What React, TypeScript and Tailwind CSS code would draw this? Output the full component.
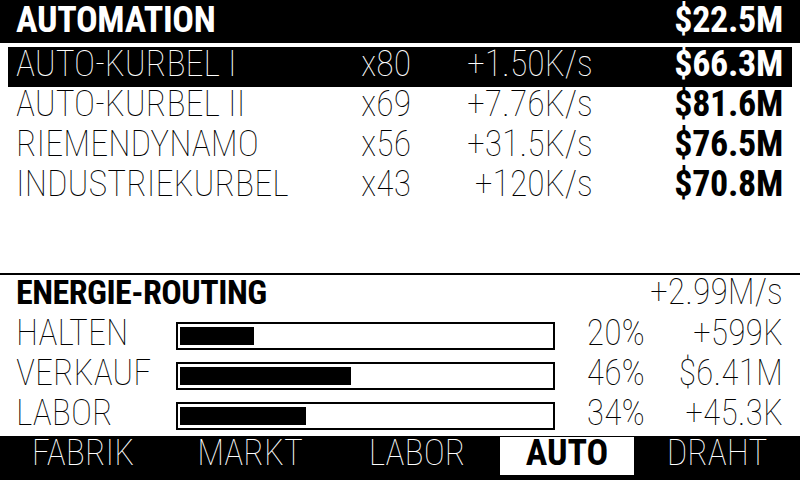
const rows = [
  { name: 'AUTO-KURBEL I', count: 'x80', rate: '+1.50K/s', price: '$66.3M', active: true },
  { name: 'AUTO-KURBEL II', count: 'x69', rate: '+7.76K/s', price: '$81.6M', active: false },
  { name: 'RIEMENDYNAMO', count: 'x56', rate: '+31.5K/s', price: '$76.5M', active: false },
  { name: 'INDUSTRIEKURBEL', count: 'x43', rate: '+120K/s', price: '$70.8M', active: false },
];

const routes = [
  { name: 'HALTEN', pct: 20, value: '+599K' },
  { name: 'VERKAUF', pct: 46, value: '$6.41M' },
  { name: 'LABOR', pct: 34, value: '+45.3K' },
];

const tabs = [
  { name: 'FABRIK', w: 'w-[166px]', active: false },
  { name: 'MARKT', w: 'w-[168px]', active: false },
  { name: 'LABOR', w: 'w-[166px]', active: false },
  { name: 'AUTO', w: 'w-[134px]', active: true },
  { name: 'DRAHT', w: 'w-[166px]', active: false },
];

export default function App() {
  return (
    <div className="w-[800px] h-[480px] bg-white text-black flex flex-col overflow-hidden font-['Roboto_Condensed',_'DejaVu_Sans_Condensed',_sans-serif] text-[36px] font-thin">
      <div className="h-[43px] bg-black text-white flex justify-between items-start pl-4 pr-[17px] font-bold leading-[40px] tracking-[-0.3px]">
        <span>AUTOMATION</span>
        <span>$22.5M</span>
      </div>
      <div className="mt-[4px] flex flex-col">
        {rows.map((r) => (
          <div
            key={r.name}
            className={`mx-2 h-[40px] flex items-start pl-2 pr-[9px] leading-[34px] ${r.active ? 'bg-black text-white' : ''}`}
          >
            <span className="w-[344px]">{r.name}</span>
            <span className="w-[88px] pl-[1px]">{r.count}</span>
            <span className="w-[145px] text-right">{r.rate}</span>
            <span className="flex-1 text-right font-bold tracking-[-0.3px]">{r.price}</span>
          </div>
        ))}
      </div>
      <div className="flex-1" />
      <div className="border-t-2 border-black flex flex-col">
        <div className="h-[41px] flex justify-between items-start pl-4 pr-[17px] leading-[34px]">
          <span className="font-bold text-[34px] tracking-[-0.5px]">ENERGIE-ROUTING</span>
          <span>+2.99M/s</span>
        </div>
        {routes.map((r) => (
          <div key={r.name} className="h-[40px] flex items-start pl-4 pr-[17px] leading-[34px]">
            <span className="w-[160px]">{r.name}</span>
            <div className="mt-[6px] w-[379px] h-[28px] border-2 border-black px-[2px] py-[3px] flex">
              <div className="h-full bg-black" style={{ width: `${r.pct}%` }} />
            </div>
            <span className="w-[90px] text-right">{r.pct}%</span>
            <span className="flex-1 text-right">{r.value}</span>
          </div>
        ))}
      </div>
      <div className="h-[44px] bg-black text-white flex items-start pt-[1px]">
        {tabs.map((t) => (
          <div
            key={t.name}
            className={`${t.w} h-[38px] flex justify-center leading-[32px] ${t.active ? 'bg-white text-black font-bold' : ''}`}
          >
            {t.name}
          </div>
        ))}
      </div>
    </div>
  );
}
